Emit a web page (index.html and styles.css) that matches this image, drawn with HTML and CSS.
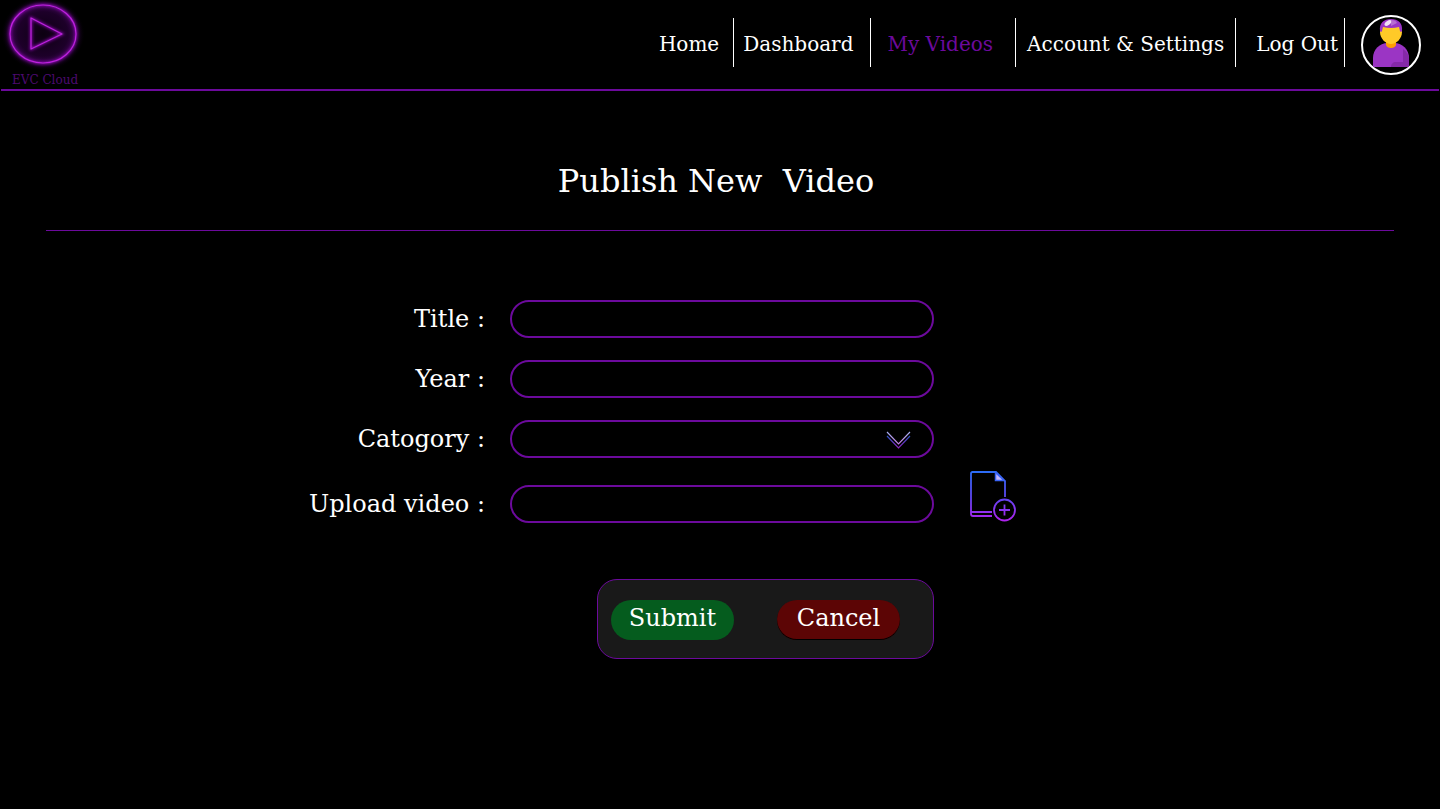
FILE: index.html
```html
<!DOCTYPE html>
<html lang="en">
<head>
<meta charset="utf-8">
<meta name="viewport" content="width=device-width, initial-scale=1">
<title>Publish New Video - EVC Cloud</title>
<link rel="stylesheet" href="styles.css">
</head>
<body>
<header class="topbar">
  <a class="brand" href="#">
    <svg class="brand-mark" viewBox="0 0 86 72" aria-hidden="true">
      <defs>
        <radialGradient id="halo"><stop offset="0" stop-color="#0c0011"/><stop offset=".6" stop-color="#1d0029"/><stop offset=".78" stop-color="#38054d"/><stop offset="1" stop-color="#000" stop-opacity="0"/></radialGradient>
        <filter id="glow" x="-20%" y="-20%" width="140%" height="140%"><feGaussianBlur stdDeviation="1.5"/></filter>
      </defs>
      <ellipse cx="43" cy="34" rx="42" ry="37" fill="url(#halo)"/>
      <g fill="none" stroke="#8a0eb0" stroke-width="2.500" filter="url(#glow)">
        <ellipse cx="43" cy="34" rx="33" ry="29"/>
        <path d="M31 18v31l31-15z"/>
      </g>
      <g fill="none" stroke="#c01fe0" stroke-width="1.2">
        <ellipse cx="43" cy="34" rx="33" ry="29"/>
        <path d="M31 18v31l31-15z" stroke-linejoin="round"/>
      </g>
    </svg>
    <span class="brand-name">EVC Cloud</span>
  </a>
  <nav class="nav" aria-label="Main">
    <a class="nav-link nav-home" href="#">Home</a>
    <a class="nav-link nav-dashboard" href="#">Dashboard</a>
    <a class="nav-link nav-videos is-active" href="#" aria-current="page">My Videos</a>
    <a class="nav-link nav-account" href="#">Account &amp; Settings</a>
    <a class="nav-link nav-logout" href="#">Log Out</a>
  </nav>
  <a class="avatar" href="#" aria-label="Profile">
    <svg viewBox="0 0 60 60" aria-hidden="true">
      <path d="M12 51V43C12 35 18 28 27 28h6c9 0 15 7 15 15v8q0 1-1 1H13q-1 0-1-1z" fill="#9b35c4"/>
      <path d="M42 34c4 3 6 6 6 10v7q0 1-1 1H30c0-3 2-5 5-5h7V37z" fill="#8529a8"/>
      <path d="M25 25h10v5q-1 3-5 3t-5-3z" fill="#ff9f00"/>
      <path d="M19 14l4-4h14l4 4v3c0 7-6 12-11 12s-11-5-11-12z" fill="#ffca28"/>
      <path d="M19 16C18 8 23 4 30 4s12 4 11 12q-1 2-2 0l-1-4q-8 2-16 0l-1 4q-1 2-2 0z" fill="#9b35c4"/>
      <ellipse cx="27" cy="8" rx="4" ry="2" fill="#fff" opacity=".85" transform="rotate(-35 27 8)"/>
      <path d="M30 5q5 0 6 3l-6 3z" fill="#be7ad6" opacity=".8"/>
    </svg>
  </a>
</header>

<main>
  <h1 class="page-title">Publish New  Video</h1>
  <form class="form">
    <div class="row">
      <label class="label" for="title">Title :</label>
      <input class="field" id="title" type="text">
    </div>
    <div class="row">
      <label class="label" for="year">Year :</label>
      <input class="field" id="year" type="text">
    </div>
    <div class="row">
      <label class="label" for="category">Catogory :</label>
      <div class="select">
        <select class="field" id="category"><option value=""></option></select>
        <svg class="chevron" viewBox="0 0 26 18" aria-hidden="true">
          <defs>
            <linearGradient id="chev-a" gradientUnits="userSpaceOnUse" x1="0" y1="0" x2="0" y2="14"><stop offset="0" stop-color="#a4b4f4"/><stop offset="1" stop-color="#c77ae0"/></linearGradient>
            <linearGradient id="chev-b" gradientUnits="userSpaceOnUse" x1="0" y1="4" x2="0" y2="18"><stop offset="0" stop-color="#2457c8"/><stop offset="1" stop-color="#9a1fc0"/></linearGradient>
          </defs>
          <path d="M1 5l11.500 12L24 5" fill="none" stroke="url(#chev-b)" stroke-width="1.200"/>
          <path d="M1 1l11.500 12L24 1" fill="none" stroke="url(#chev-a)" stroke-width="1.200"/>
        </svg>
      </div>
    </div>
    <div class="row row-upload">
      <label class="label" for="upload">Upload video :</label>
      <input class="field" id="upload" type="text">
      <button class="add-file" type="button" aria-label="Add file">
        <svg viewBox="0 0 48 52" aria-hidden="true">
          <defs><linearGradient id="file" gradientUnits="userSpaceOnUse" x1="0" y1="0" x2="0" y2="52"><stop offset="0" stop-color="#2b6df6"/><stop offset=".5" stop-color="#5e46f2"/><stop offset="1" stop-color="#b620ee"/></linearGradient></defs>
          <g fill="none" stroke="url(#file)" stroke-width="1.8">
            <path d="M36 26V10L27 1H3.500Q2 1 2 2.500V43q0 2 2 2h19M2 41h21"/>
            <circle cx="35.500" cy="39" r="10.500"/>
            <path d="M35.500 33.500v11M30 39h11"/>
          </g>
          <path d="M26.500 1.500V9.500H35z" fill="#c5b8fb" stroke="#3b64f5" stroke-width="1.500"/>
        </svg>
      </button>
    </div>
    <div class="row row-actions">
      <div class="actions">
        <button class="btn btn-submit" type="submit">Submit</button>
        <button class="btn btn-cancel" type="reset">Cancel</button>
      </div>
    </div>
  </form>
</main>
</body>
</html>
```
FILE: styles.css
```css
:root {
  --purple: #6c0a9c;
}

* { box-sizing: border-box; }

body {
  margin: 0;
  min-height: 100vh;
  background: #000;
  color: #fff;
  font-family: "DejaVu Serif", serif;
}

a { color: inherit; text-decoration: none; }

.topbar {
  display: flex;
  align-items: flex-start;
  margin: 0 1px;
  padding-right: 18px;
  border-bottom: 2px solid var(--purple);
}

.brand {
  display: flex;
  flex-direction: column;
  margin-right: auto;
  height: 89px;
}

.brand-mark {
  display: block;
  width: 86px;
  height: 72px;
  margin-left: -1px;
}

.brand-name {
  padding-left: 11px;
  color: #4d0a70;
  font-size: 12px;
  line-height: 16px;
}

.nav {
  display: flex;
  margin: 18px 16px 0 0;
}

.nav-link {
  height: 49px;
  padding-top: 3px;
  border-right: 1px solid #fff;
  font-size: 20px;
  line-height: 46px;
  white-space: nowrap;
}

.nav-home { padding-right: 14px; }
.nav-dashboard { padding-left: 9px; padding-right: 17px; }
.nav-videos { padding-left: 16px; padding-right: 22px; }
.nav-account { padding-left: 11px; padding-right: 11px; }
.nav-logout { padding-left: 20px; padding-right: 6px; }
.is-active { color: var(--purple); }

.avatar {
  width: 60px;
  height: 60px;
  margin-top: 15px;
  border: 2px solid #fff;
  border-radius: 50%;
}

.avatar svg {
  display: block;
  width: 60px;
  height: 60px;
  margin: -2px;
}

.page-title {
  margin: 0 46px;
  padding: 70px 8px 29px 0;
  border-bottom: 1px solid var(--purple);
  font-size: 32px;
  font-weight: 400;
  line-height: 40px;
  text-align: center;
  white-space: pre;
}

.form {
  display: flex;
  flex-direction: column;
  gap: 22px;
  padding: 69px 0 40px 4px;
}

.row {
  display: grid;
  grid-template-columns: 1fr 424px 1fr;
  column-gap: 25px;
  align-items: center;
}

.row-upload { margin-top: 5px; }
.row-actions { margin-top: 34px; }

.label {
  font-size: 24px;
  line-height: 36px;
  text-align: right;
}

.field {
  display: block;
  width: 100%;
  height: 38px;
  padding: 0 20px;
  border: 2px solid var(--purple);
  border-radius: 20px;
  background: #000;
  color: #fff;
  font: 20px "DejaVu Serif", serif;
  appearance: none;
}

.select { position: relative; }

.chevron {
  position: absolute;
  top: 11px;
  right: 22px;
  width: 26px;
  height: 18px;
  pointer-events: none;
}

.add-file {
  width: 48px;
  height: 52px;
  margin: -14px 0 0 10px;
  padding: 0;
  border: 0;
  background: none;
}

.add-file svg { display: block; }

.actions {
  grid-column: 2;
  justify-self: end;
  display: flex;
  gap: 43px;
  padding: 20px 33px 18px 13px;
  border: 1px solid var(--purple);
  border-radius: 20px;
  background: #191919;
}

.btn {
  width: 123px;
  height: 40px;
  padding: 0 0 4px;
  border: 0;
  border-radius: 20px;
  color: #fff;
  font: 24px "DejaVu Serif", serif;
}

.btn-submit { background: #055c1e; }
.btn-cancel { background: #5c0505; box-shadow: inset 0 -1px 0 #000; }
```
